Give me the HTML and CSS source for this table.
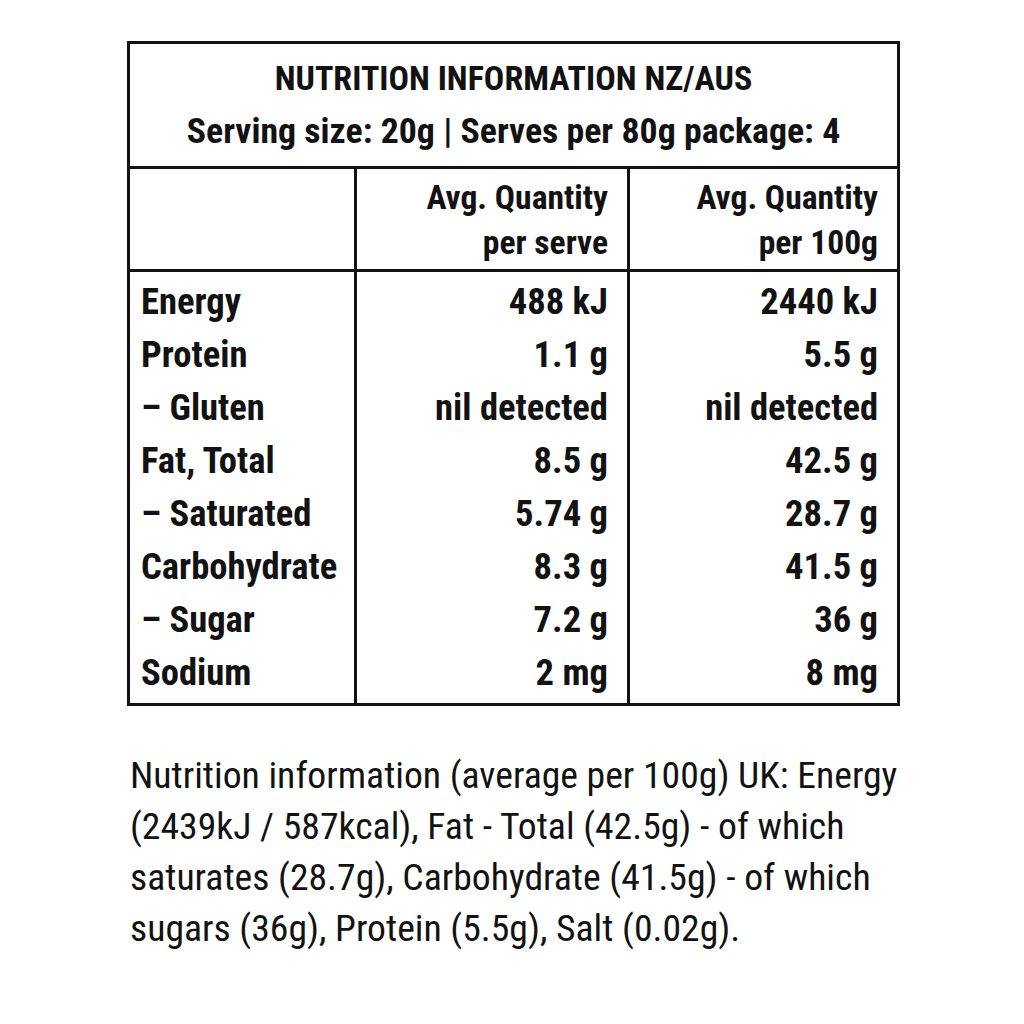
FILE: index.html
```html
<!DOCTYPE html>
<html lang="en">
<head>
<meta charset="utf-8">
<title>Nutrition Information</title>
<link rel="stylesheet" href="styles.css">
</head>
<body>
<main class="page">
  <table class="panel">
    <colgroup>
      <col class="c1"><col class="c2"><col class="c3">
    </colgroup>
    <thead>
      <tr>
        <th colspan="3" class="title">
          <div class="title-main">NUTRITION INFORMATION NZ/AUS</div>
          <div class="title-sub">Serving size: 20g | Serves per 80g package: 4</div>
        </th>
      </tr>
      <tr class="colhead">
        <th></th>
        <th>Avg. Quantity<br>per serve</th>
        <th>Avg. Quantity<br>per 100g</th>
      </tr>
    </thead>
    <tbody>
      <tr class="first"><td>Energy</td><td>488 kJ</td><td>2440 kJ</td></tr>
      <tr><td>Protein</td><td>1.1 g</td><td>5.5 g</td></tr>
      <tr><td>– Gluten</td><td>nil detected</td><td>nil detected</td></tr>
      <tr><td>Fat, Total</td><td>8.5 g</td><td>42.5 g</td></tr>
      <tr><td>– Saturated</td><td>5.74 g</td><td>28.7 g</td></tr>
      <tr><td>Carbohydrate</td><td>8.3 g</td><td>41.5 g</td></tr>
      <tr><td>– Sugar</td><td>7.2 g</td><td>36 g</td></tr>
      <tr class="last"><td>Sodium</td><td>2 mg</td><td>8 mg</td></tr>
    </tbody>
  </table>
  <p class="uk">Nutrition information (average per 100g) UK: Energy (2439kJ / 587kcal), Fat - Total (42.5g) - of which saturates (28.7g), Carbohydrate (41.5g) - of which sugars (36g), Protein (5.5g), Salt (0.02g).</p>
</main>
</body>
</html>
```

FILE: styles.css
```css
html, body {
  margin: 0;
  padding: 0;
  background: #ffffff;
}

body {
  color: #121212;
  font-family: "Roboto Condensed", "DejaVu Sans Condensed", sans-serif;
}

.page {
  padding: 41px 0 0 127px;
}

.panel {
  border-collapse: collapse;
  border: 3px solid #121212;
  width: 770px;
  table-layout: fixed;
}

.c1 { width: 227px; }
.c2 { width: 273px; }
.c3 { width: 270px; }

.title {
  padding: 0 0 12px;
  text-align: center;
  font-weight: bold;
  border-bottom: 3px solid #121212;
  white-space: nowrap;
}

.title-main {
  font-size: 34px;
  line-height: 60px;
  padding-top: 4px;
}

.title-sub {
  font-size: 35.8px;
  line-height: 46px;
}

.colhead th {
  font-size: 33.6px;
  font-weight: bold;
  line-height: 45px;
  text-align: right;
  padding: 6px 19px 4px 0;
  border-bottom: 3px solid #121212;
  vertical-align: top;
  white-space: nowrap;
}

.colhead th + th {
  border-left: 3px solid #121212;
}

tbody td {
  font-size: 36.6px;
  font-weight: bold;
  line-height: 53px;
  height: 53px;
  padding: 0 19px 0 0;
  text-align: right;
  white-space: nowrap;
}

tbody td:first-child {
  text-align: left;
  padding: 0 0 0 11px;
}

tbody td + td {
  border-left: 3px solid #121212;
}

tbody tr.first td { padding-top: 3px; }
tbody tr.last td { padding-bottom: 4px; }

.uk {
  margin: 44px 0 0 3px;
  width: 785px;
  font-size: 37.7px;
  line-height: 51px;
  font-weight: normal;
}
```
